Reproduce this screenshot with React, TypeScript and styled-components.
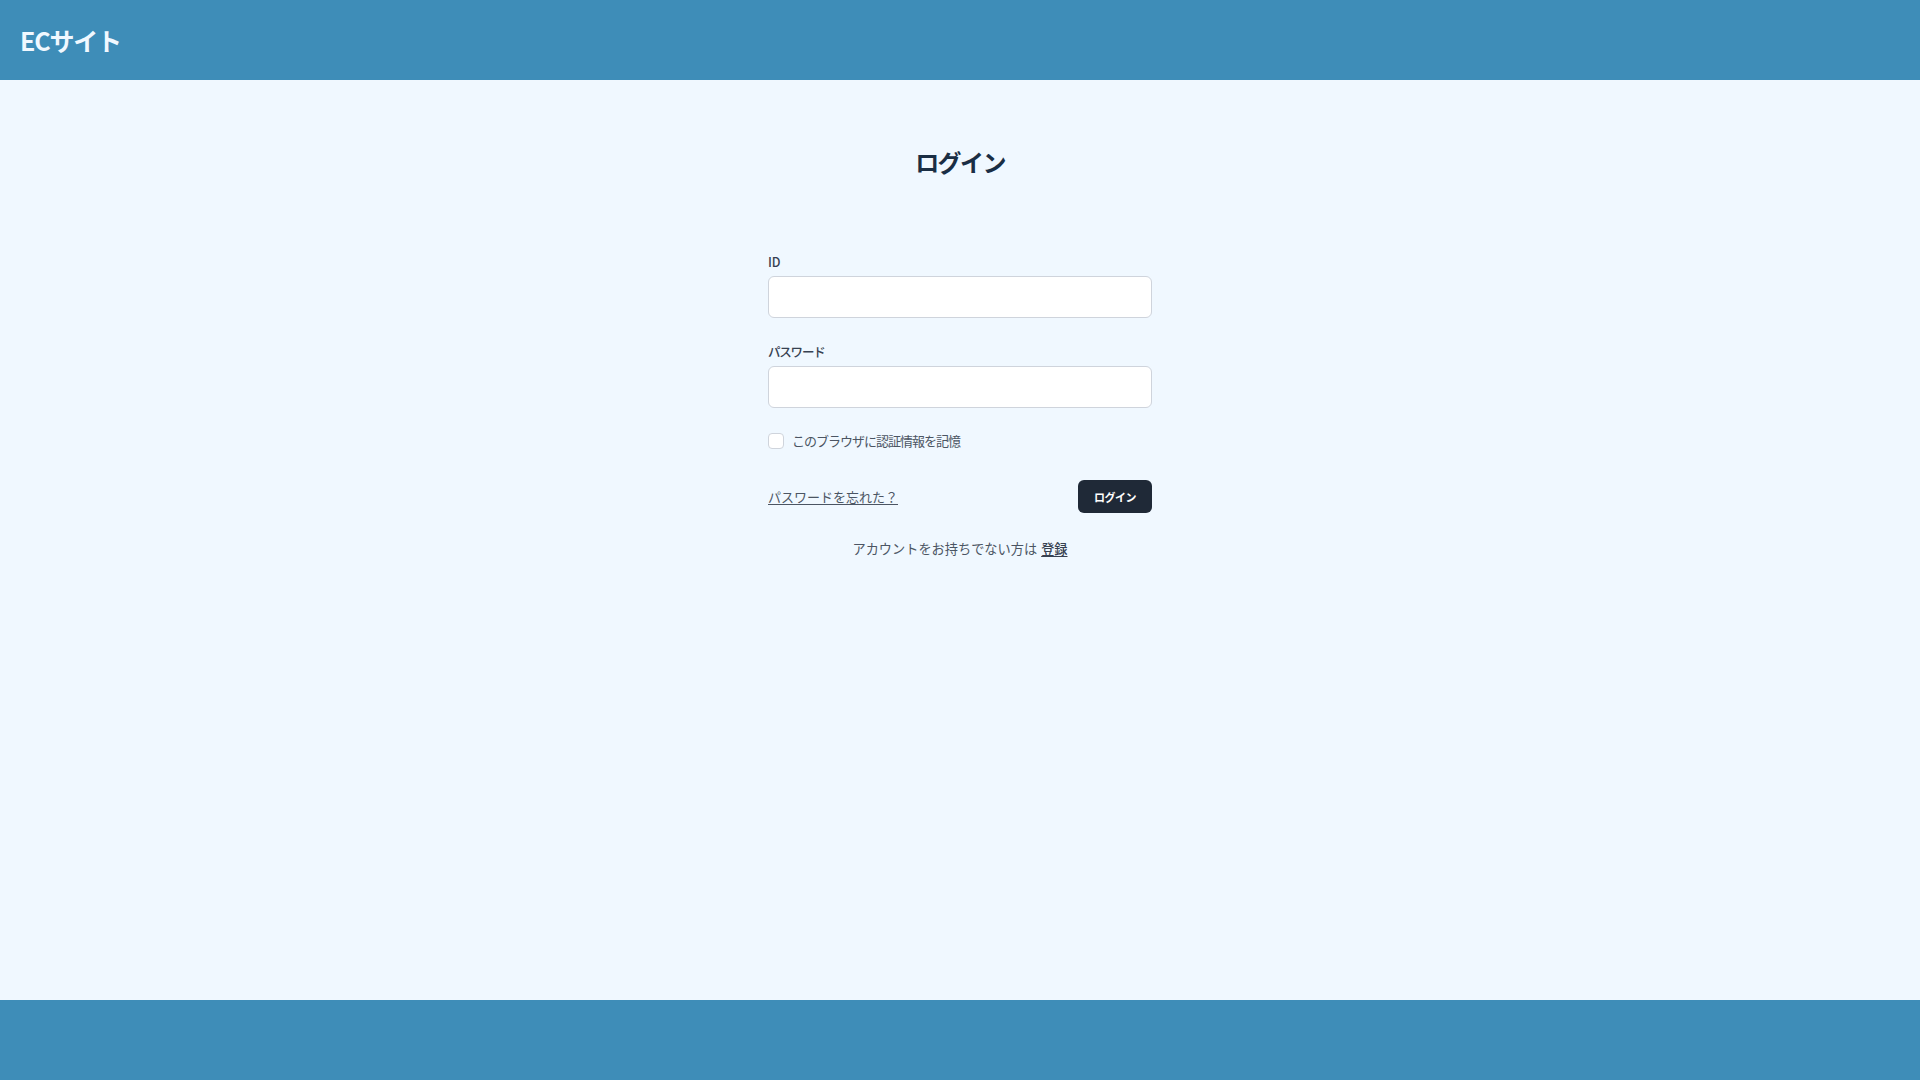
import { createGlobalStyle, styled } from 'styled-components'

const GlobalStyle = createGlobalStyle`
    * {
        box-sizing: border-box;
    }
    html, body {
        margin: 0;
        padding: 0;
    }
    body {
        font-family: "Noto Sans CJK JP", "Noto Sans", sans-serif;
        background: #f0f8ff;
        color: #374151;
    }
`

const StyledPage = styled.div`
    display: flex;
    flex-direction: column;
    min-height: 100vh;
`

const StyledHeader = styled.header`
    height: 80px;
    background: #3e8db8;
    display: flex;
    align-items: center;
    padding-left: 20px;
`

const StyledLogo = styled.h1`
    margin: 0;
    font-size: 25px;
    font-weight: 700;
    color: #f0f8ff;
    letter-spacing: -1.2px;
`

const StyledMain = styled.main`
    flex: 1;
    display: flex;
    flex-direction: column;
    align-items: center;
    padding-top: 64px;
`

const StyledTitle = styled.h2`
    margin: 0;
    font-size: 24px;
    line-height: 36px;
    font-weight: 700;
    color: #1a2e44;
    letter-spacing: -1.6px;
`

const StyledForm = styled.form`
    width: 384px;
    margin-top: 72px;
    display: flex;
    flex-direction: column;
`

const StyledField = styled.div<{ $spacing?: number }>`
    display: flex;
    flex-direction: column;
    gap: 4px;
    margin-bottom: ${p => p.$spacing ?? 0}px;
`

const StyledLabel = styled.label<{ $tight?: boolean }>`
    font-size: 12.5px;
    line-height: 20px;
    font-weight: 500;
    color: #374151;
    letter-spacing: ${p => (p.$tight ? '-1.2px' : '0')};
`

const StyledInput = styled.input`
    height: 42px;
    width: 100%;
    border: 1px solid #cfd4dc;
    border-radius: 6px;
    background: #fff;
    padding: 0 12px;
    font-size: 14px;
    outline: none;
`

const StyledCheckRow = styled.label`
    display: flex;
    align-items: center;
    gap: 8px;
    margin-top: 23px;
    font-size: 13px;
    line-height: 20px;
    color: #4b5563;
    letter-spacing: -1px;
`

const StyledCheckbox = styled.input`
    appearance: none;
    margin: 0;
    width: 16px;
    height: 16px;
    border: 1px solid #cfd4dc;
    border-radius: 4px;
    background: #fff;
`

const StyledActions = styled.div`
    display: flex;
    align-items: center;
    justify-content: space-between;
    margin-top: 29px;
`

const StyledLink = styled.a`
    font-size: 13px;
    color: #4b5563;
    text-decoration: underline;
    text-underline-offset: 2px;
`

const StyledButton = styled.button`
    width: 74px;
    height: 33px;
    border: none;
    border-radius: 6px;
    background: #1f2937;
    color: #fff;
    font-family: inherit;
    font-size: 11px;
    font-weight: 700;
    letter-spacing: -0.5px;
`

const StyledRegister = styled.p`
    margin: 26px 0 0;
    text-align: center;
    font-size: 13.2px;
    line-height: 20px;
    color: #4b5563;
`

const StyledRegisterLink = styled.a`
    color: #374151;
    font-weight: 500;
    text-decoration: underline;
    text-underline-offset: 2px;
    margin-left: 4px;
`

const StyledFooter = styled.footer`
    height: 80px;
    background: #3e8db8;
`

export default function App() {
    return (
        <>
            <GlobalStyle />
            <StyledPage>
                <StyledHeader>
                    <StyledLogo>ECサイト</StyledLogo>
                </StyledHeader>
                <StyledMain>
                    <StyledTitle>ログイン</StyledTitle>
                    <StyledForm onSubmit={e => e.preventDefault()}>
                        <StyledField $spacing={24}>
                            <StyledLabel htmlFor="id">ID</StyledLabel>
                            <StyledInput id="id" type="text" />
                        </StyledField>
                        <StyledField>
                            <StyledLabel htmlFor="password" $tight>パスワード</StyledLabel>
                            <StyledInput id="password" type="password" />
                        </StyledField>
                        <StyledCheckRow>
                            <StyledCheckbox type="checkbox" />
                            このブラウザに認証情報を記憶
                        </StyledCheckRow>
                        <StyledActions>
                            <StyledLink href="#">パスワードを忘れた？</StyledLink>
                            <StyledButton type="submit">ログイン</StyledButton>
                        </StyledActions>
                        <StyledRegister>
                            アカウントをお持ちでない方は
                            <StyledRegisterLink href="#">登録</StyledRegisterLink>
                        </StyledRegister>
                    </StyledForm>
                </StyledMain>
                <StyledFooter />
            </StyledPage>
        </>
    )
}
